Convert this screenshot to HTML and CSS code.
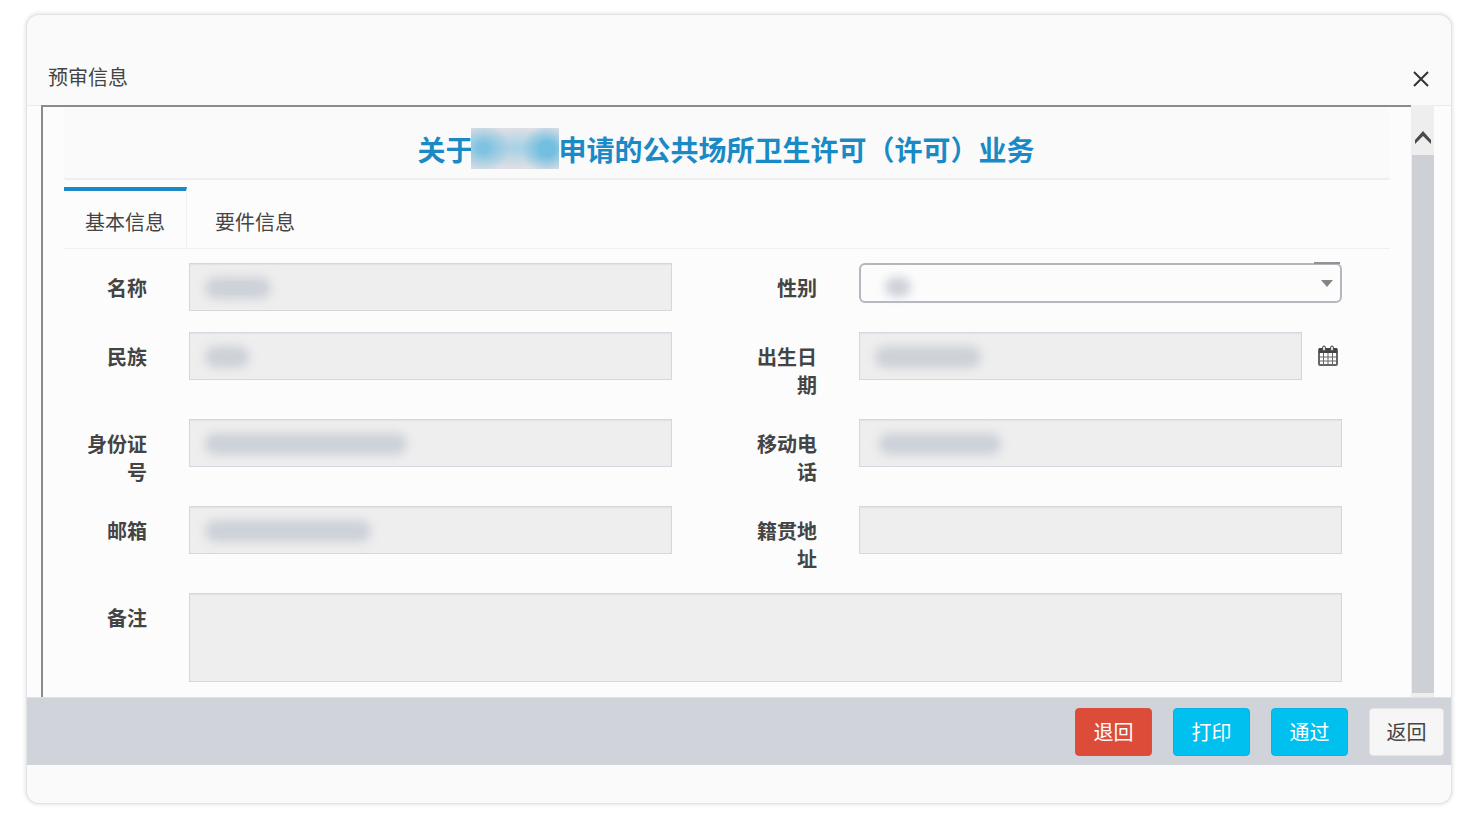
FILE: index.html
```html
<!DOCTYPE html>
<html lang="zh-CN">
<head>
    <meta charset="UTF-8">
    <meta name="viewport" content="width=device-width, initial-scale=1.0">
    <title>预审信息</title>
    <link rel="stylesheet" href="styles.css">
</head>
<body>
    <div class="dialog">
        <div class="dialog-header">
            <h1>预审信息</h1>
            <button type="button" class="close" aria-label="关闭">
                <svg width="16" height="16" viewBox="0 0 16 16"><path d="M1 1L15 15M15 1L1 15" stroke="#333" stroke-width="2" fill="none"/></svg>
            </button>
        </div>

        <div class="dialog-body">
            <div class="content">
                <h2 class="business-title">关于<span class="title-mask"></span>申请的公共场所卫生许可（许可）业务</h2>

                <div class="tabs">
                    <a href="#basic" class="tab active">基本信息</a>
                    <a href="#material" class="tab">要件信息</a>
                </div>

                <form class="info-form" id="basic">
                    <div class="field">
                        <label for="name">名称</label>
                        <div class="control">
                            <input type="text" id="name" readonly>
                            <span class="mask mask-name"></span>
                        </div>
                    </div>
                    <div class="field">
                        <label for="sex">性别</label>
                        <div class="control select">
                            <select id="sex"><option></option></select>
                            <span class="mask mask-sex"></span>
                            <svg class="arrow" width="12" height="7" viewBox="0 0 12 7"><path d="M0 0H12L6 7Z" fill="#858585"/></svg>
                        </div>
                    </div>
                    <div class="field">
                        <label for="nation">民族</label>
                        <div class="control">
                            <input type="text" id="nation" readonly>
                            <span class="mask mask-nation"></span>
                        </div>
                    </div>
                    <div class="field">
                        <label for="birthday">出生日期</label>
                        <div class="control date">
                            <input type="text" id="birthday" readonly>
                            <span class="mask mask-birthday"></span>
                            <button type="button" class="date-button" aria-label="选择日期">
                                <svg width="20" height="21" viewBox="0 0 20 21">
                                    <rect x="1" y="4" width="18" height="16" rx="1" fill="#fcfcfc" stroke="#666" stroke-width="2"/>
                                    <path d="M1 3H19V8H1Z" fill="#444"/>
                                    <path d="M5.5 8V20M10 8V20M14.5 8V20M1 12H19M1 16H19" stroke="#666" stroke-width="1" fill="none"/>
                                    <rect x="4.5" y="1" width="3" height="5" rx="1.5" fill="#ddd" stroke="#444"/>
                                    <rect x="12.5" y="1" width="3" height="5" rx="1.5" fill="#ddd" stroke="#444"/>
                                </svg>
                            </button>
                        </div>
                    </div>
                    <div class="field">
                        <label for="idcard">身份证号</label>
                        <div class="control">
                            <input type="text" id="idcard" readonly>
                            <span class="mask mask-idcard"></span>
                        </div>
                    </div>
                    <div class="field">
                        <label for="mobile">移动电话</label>
                        <div class="control">
                            <input type="text" id="mobile" readonly>
                            <span class="mask mask-mobile"></span>
                        </div>
                    </div>
                    <div class="field">
                        <label for="email">邮箱</label>
                        <div class="control">
                            <input type="text" id="email" readonly>
                            <span class="mask mask-email"></span>
                        </div>
                    </div>
                    <div class="field">
                        <label for="address">籍贯地址</label>
                        <div class="control">
                            <input type="text" id="address" readonly>
                        </div>
                    </div>
                    <div class="field full">
                        <label for="remark">备注</label>
                        <div class="control">
                            <textarea id="remark" readonly></textarea>
                        </div>
                    </div>
                </form>
            </div>

            <div class="scrollbar">
                <div class="scroll-up">
                    <svg width="16" height="13" viewBox="0 0 16 13"><path d="M0 9L8 0L16 9V13L8 5L0 13Z" fill="#4a4a4a"/></svg>
                </div>
                <div class="thumb"></div>
            </div>
        </div>

        <div class="dialog-footer">
            <button type="button" class="btn btn-danger">退回</button>
            <button type="button" class="btn btn-info">打印</button>
            <button type="button" class="btn btn-info">通过</button>
            <button type="button" class="btn btn-default">返回</button>
        </div>
    </div>
</body>
</html>
```
FILE: styles.css
```css
* {
    box-sizing: border-box;
}

body {
    margin: 0;
    padding: 15px 24px 15px 27px;
    background: #fff;
    color: #444;
    font-family: "Noto Sans CJK SC", sans-serif;
    font-size: 20px;
    line-height: 28px;
}

button,
input,
select,
textarea {
    font: inherit;
    color: inherit;
}

.dialog {
    padding-bottom: 38px;
    background: #fafafa;
    border-radius: 12px;
    box-shadow: 0 0 1px 1px #e0e1e5, 0 0 3px 3px #f0f0f0;
}

/* header */
.dialog-header {
    display: flex;
    align-items: flex-end;
    justify-content: space-between;
    height: 91px;
    padding: 0 22px 14px 21px;
    border-bottom: 1px solid #ececec;
}

.dialog-header h1 {
    margin: 0;
    font-size: 20px;
    font-weight: normal;
}

.close {
    display: flex;
    padding: 0 0 4px;
    border: none;
    background: none;
    cursor: pointer;
}

/* body */
.dialog-body {
    display: flex;
    margin-top: -1px;
    padding: 0 17px 0 14px;
    background: linear-gradient(#fcfcfc, #fcfcfc) 0 1px no-repeat;
}

.content {
    flex: 1;
    min-width: 0;
    padding: 0 21px 15px;
    border-top: 2px solid #8b8b8f;
    border-left: 2px solid #8b8b8f;
}

.business-title {
    display: flex;
    align-items: center;
    justify-content: center;
    height: 73px;
    margin: 0 0 7px;
    padding: 12px 2px 0 0;
    background: #fafafa;
    border-bottom: 2px solid #eee;
    border-radius: 3px;
    color: #1a8ac6;
    font-size: 28px;
    font-weight: bold;
}

.title-mask {
    width: 88px;
    height: 41px;
    margin-left: -3px;
    background:
        radial-gradient(ellipse 26px 24px at 76px 21px, #74bfe0 30%, transparent),
        radial-gradient(ellipse 28px 24px at 12px 20px, #80c3e1 20%, transparent),
        radial-gradient(ellipse 44px 20px at 46px 20px, #a5d0e4, transparent),
        #dddfe5;
}

.tabs {
    display: flex;
    gap: 8px;
    border-bottom: 1px solid #f0f0f0;
}

.tab {
    height: 61px;
    padding: 21px 21px 0 20px;
    color: #444;
    text-decoration: none;
}

.tab.active {
    margin-bottom: -1px;
    padding: 17px 21px 0;
    border-top: 4px solid #1a8ac6;
    border-right: 1px solid #f0f0f0;
    background: #fcfcfc;
}

.info-form {
    display: grid;
    grid-template-columns: 1fr 1fr;
    gap: 21px 85px;
    padding: 14px 48px 0 23px;
}

.field {
    display: flex;
    align-items: flex-start;
    gap: 42px;
}

.field.full {
    grid-column: 1 / 3;
}

.field label {
    flex: none;
    width: 60px;
    margin-bottom: -1px;
    padding-top: 11px;
    font-weight: bold;
    text-align: right;
}

.control {
    position: relative;
    display: flex;
    flex: 1;
    min-width: 0;
}

.control input,
.control textarea {
    flex: 1;
    width: 100%;
    min-width: 0;
    height: 48px;
    padding: 8px 14px;
    background: #eee;
    border: 1px solid #d5d7de;
    border-radius: 0;
    outline: none;
    box-shadow: inset 0 1px 1px #dfe1e6;
}

.control textarea {
    height: 89px;
    resize: none;
}

.control select {
    width: 100%;
    height: 40px;
    padding: 0 24px;
    appearance: none;
    background: #fcfcfc;
    border: 2px solid #b4b8be;
    border-radius: 6px;
}

.select::before {
    content: "";
    position: absolute;
    top: -1px;
    right: 2px;
    width: 26px;
    height: 2px;
    background: #929292;
}

.arrow {
    position: absolute;
    top: 17px;
    right: 9px;
    pointer-events: none;
}

.date {
    gap: 16px;
}

.date-button {
    display: flex;
    align-items: center;
    padding: 0 4px 2px 0;
    border: none;
    background: none;
    cursor: pointer;
}

/* hidden personal data */
.mask {
    position: absolute;
    top: 14px;
    left: 16px;
    height: 22px;
    background: #cdd1d8;
    border-radius: 10px;
    filter: blur(5px);
    pointer-events: none;
}

.mask-name {
    width: 66px;
}

.mask-nation {
    width: 44px;
}

.mask-idcard {
    width: 202px;
}

.mask-email {
    width: 166px;
}

.mask-birthday {
    width: 106px;
}

.mask-mobile {
    left: 20px;
    width: 122px;
}

.mask-sex {
    left: 26px;
    width: 26px;
    height: 20px;
}

/* scrollbar */
.scrollbar {
    display: flex;
    flex-direction: column;
    width: 23px;
    padding-bottom: 4px;
    background: #eee;
}

.scroll-up {
    display: flex;
    align-items: flex-end;
    justify-content: center;
    height: 50px;
    padding-bottom: 11px;
}

.thumb {
    flex: 1;
    margin-left: 1px;
    background: #cdd1d6;
}

/* footer */
.dialog-footer {
    display: flex;
    align-items: center;
    justify-content: flex-end;
    gap: 21px;
    height: 68px;
    padding: 1px 7px 0;
    background: #d0d4da;
    border-top: 1px solid #dfe1e5;
}

.btn {
    width: 77px;
    height: 48px;
    padding: 0;
    border: 1px solid transparent;
    border-radius: 4px;
    color: #fff;
    cursor: pointer;
}

.btn-danger {
    background: #dd4b39;
    border-color: #d9503f;
}

.btn-info {
    background: #00c0ef;
    border-color: #08b2e4;
}

.btn-default {
    width: 75px;
    background: #f6f6f6;
    border-color: #e4e4e6;
    color: #444;
}
```
